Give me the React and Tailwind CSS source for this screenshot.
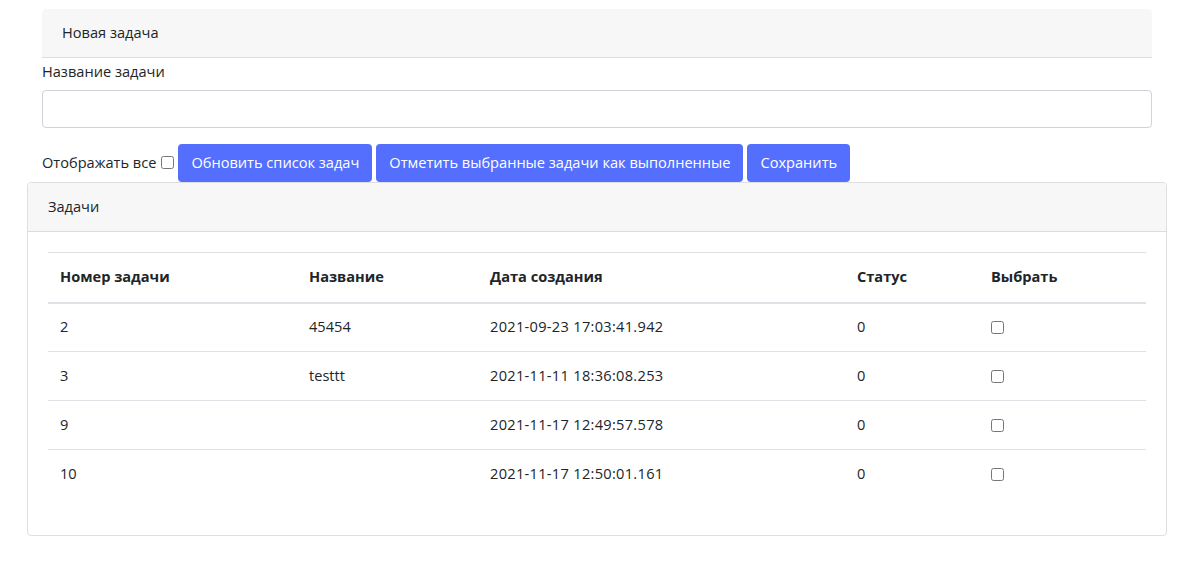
import { useState } from "react";

const rows = [
  { id: 2, name: "45454", date: "2021-09-23 17:03:41.942", status: 0 },
  { id: 3, name: "testtt", date: "2021-11-11 18:36:08.253", status: 0 },
  { id: 9, name: "", date: "2021-11-17 12:49:57.578", status: 0 },
  { id: 10, name: "", date: "2021-11-17 12:50:01.161", status: 0 },
];

export default function App() {
  const [showAll, setShowAll] = useState(false);
  const [title, setTitle] = useState("");

  return (
    <div
      className="min-h-screen bg-white text-[#212529] text-[14.6px]"
      style={{ fontFamily: '"Open Sans", "Noto Sans", sans-serif' }}
    >
      {/* New task */}
      <div className="mx-[42px] w-[1110px] pt-[9px]">
        <div className="h-[49px] bg-[#f7f7f7] border-b border-[#dcdcdc] rounded-t-[4px] flex items-center px-[20px]">
          Новая задача
        </div>
        <label className="block mt-[3px] leading-[20px]">Название задачи</label>
        <input
          value={title}
          onChange={(e) => setTitle(e.target.value)}
          className="block mt-[9px] w-full h-[38px] border border-[#ced4da] rounded-[4px] px-3 outline-none"
        />
        <div className="flex items-center gap-[4px] mt-[16px] h-[38px]">
          <span className="flex items-center gap-[5px]">
            Отображать все
            <input
              type="checkbox"
              checked={showAll}
              onChange={(e) => setShowAll(e.target.checked)}
              className="w-[13px] h-[13px] m-0"
            />
          </span>
          <button className="h-[38px] px-[13px] bg-[#546ffe] text-white rounded-[4px]">
            Обновить список задач
          </button>
          <button className="h-[38px] px-[13px] bg-[#546ffe] text-white rounded-[4px]">
            Отметить выбранные задачи как выполненные
          </button>
          <button className="h-[38px] px-[13px] bg-[#546ffe] text-white rounded-[4px]">
            Сохранить
          </button>
        </div>
      </div>

      {/* Tasks */}
      <div className="ml-[27px] w-[1140px] border border-[#dfdfdf] rounded-[4px]">
        <div className="h-[49px] bg-[#f7f7f7] border-b border-[#dcdcdc] rounded-t-[4px] flex items-center px-[20px]">
          Задачи
        </div>
        <div className="px-[20px] pt-[20px] pb-[36px]">
          <table className="w-full border-collapse text-left table-fixed">
            <thead>
              <tr className="border-t border-[#dee2e6] border-b-2 border-b-[#dee2e6] h-[50px]">
                <th className="px-[12px] font-bold w-[249px]">Номер задачи</th>
                <th className="px-[12px] font-bold w-[181px]">Название</th>
                <th className="px-[12px] font-bold w-[367px]">Дата создания</th>
                <th className="px-[12px] font-bold w-[134px]">Статус</th>
                <th className="px-[12px] font-bold">Выбрать</th>
              </tr>
            </thead>
            <tbody>
              {rows.map((r, i) => (
                <tr
                  key={r.id}
                  className={`h-[49px] ${i < rows.length - 1 ? "border-b border-[#dee2e6]" : ""}`}
                >
                  <td className="px-[12px]">{r.id}</td>
                  <td className="px-[12px]">{r.name}</td>
                  <td className="px-[12px] tracking-[0.3px]">{r.date}</td>
                  <td className="px-[12px]">{r.status}</td>
                  <td className="px-[12px]">
                    <input type="checkbox" className="block w-[13px] h-[13px] m-0" />
                  </td>
                </tr>
              ))}
            </tbody>
          </table>
        </div>
      </div>
    </div>
  );
}
